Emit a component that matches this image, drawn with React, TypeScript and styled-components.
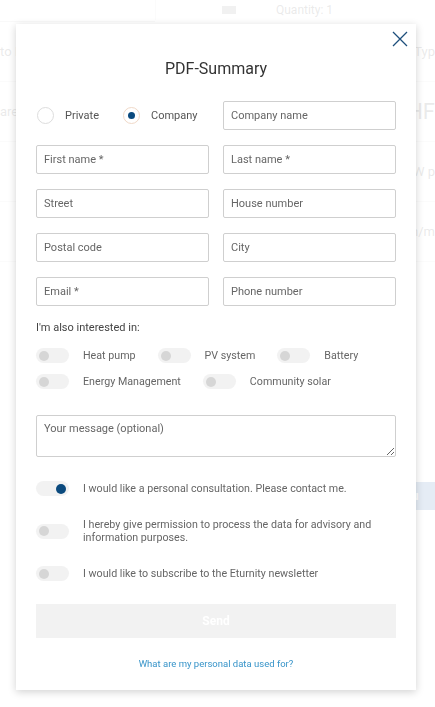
import styled, { createGlobalStyle } from "styled-components";
import { useState } from "react";

const GlobalStyle = createGlobalStyle`
    html, body {
        margin: 0;
        padding: 0;
        font-family: Roboto, "Liberation Sans", sans-serif;
        background: #ffffff;
    }
    * {
        box-sizing: border-box;
    }
`;

const interests = [
    ["Heat pump", "PV system", "Battery"],
    ["Energy Management", "Community solar"],
];

function Toggle({ on, onClick }: { on: boolean; onClick: () => void }) {
    return (
        <Track onClick={onClick}>
            <Knob $on={on} />
        </Track>
    );
}

export default function App() {
    const [kind, setKind] = useState("company");
    const [checks, setChecks] = useState<Record<string, boolean>>({ consult: true });

    const flip = (key: string) => {
        setChecks({ ...checks, [key]: !checks[key] });
    };

    return (
        <>
            <GlobalStyle />
            <Page>
                <PageTop>
                    <SearchStrip />
                    <Quantity>
                        <QtyIcon />
                        <span>Quantity: 1</span>
                    </Quantity>
                </PageTop>
                <PageRows>
                    <PageRow>
                        <span>to I</span>
                        <span>(Typ</span>
                    </PageRow>
                    <PageRow>
                        <span>are</span>
                        <BigText>HF</BigText>
                    </PageRow>
                    <PageRow>
                        <span></span>
                        <span>kW p</span>
                    </PageRow>
                    <PageRow>
                        <span></span>
                        <span>h/m</span>
                    </PageRow>
                </PageRows>
                <PageButton>you</PageButton>
            </Page>

            <Overlay>
                <Modal>
                    <CloseBtn aria-label="close">
                        <svg width="16" height="16" viewBox="0 0 16 16">
                            <path d="M1 1 L15 15 M15 1 L1 15" stroke="#1d4f7c" strokeWidth="1.3" fill="none" />
                        </svg>
                    </CloseBtn>
                    <Title>PDF-Summary</Title>

                    <Grid>
                        <RadioRow>
                            <RadioItem onClick={() => setKind("private")}>
                                <Radio $checked={kind === "private"} />
                                Private
                            </RadioItem>
                            <RadioItem onClick={() => setKind("company")}>
                                <Radio $checked={kind === "company"} />
                                Company
                            </RadioItem>
                        </RadioRow>
                        <Field placeholder="Company name" />
                        <Field placeholder="First name *" />
                        <Field placeholder="Last name *" />
                        <Field placeholder="Street" />
                        <Field placeholder="House number" />
                        <Field placeholder="Postal code" />
                        <Field placeholder="City" />
                        <Field placeholder="Email *" />
                        <Field placeholder="Phone number" />
                    </Grid>

                    <SubHead>I'm also interested in:</SubHead>
                    <Interests>
                        {interests.map((row, i) => (
                            <InterestRow key={i}>
                                {row.map((name) => (
                                    <Option key={name}>
                                        <Toggle on={!!checks[name]} onClick={() => flip(name)} />
                                        <OptionLabel>{name}</OptionLabel>
                                    </Option>
                                ))}
                            </InterestRow>
                        ))}
                    </Interests>

                    <Message placeholder="Your message (optional)" />

                    <Consents>
                        <Consent>
                            <Toggle on={!!checks.consult} onClick={() => flip("consult")} />
                            <ConsentText>I would like a personal consultation. Please contact me.</ConsentText>
                        </Consent>
                        <Consent>
                            <Toggle on={!!checks.permission} onClick={() => flip("permission")} />
                            <ConsentText>
                                I hereby give permission to process the data for advisory and
                                information purposes.
                            </ConsentText>
                        </Consent>
                        <Consent>
                            <Toggle on={!!checks.newsletter} onClick={() => flip("newsletter")} />
                            <ConsentText>I would like to subscribe to the Eturnity newsletter</ConsentText>
                        </Consent>
                    </Consents>

                    <SendBtn disabled>Send</SendBtn>
                    <InfoLink href="#">What are my personal data used for?</InfoLink>
                </Modal>
            </Overlay>
        </>
    );
}

const Page = styled.div`
    width: 100vw;
    height: 100vh;
    overflow: hidden;
    color: #555;
    font-size: 12px;
`;

const PageTop = styled.div`
    display: flex;
    height: 22px;
`;

const SearchStrip = styled.div`
    width: 155px;
    border-bottom: 1px solid #ccc;
`;

const Quantity = styled.div`
    display: flex;
    align-items: center;
    gap: 40px;
    padding-left: 66px;
    border-left: 1px solid #ddd;
    height: 20px;
`;

const QtyIcon = styled.div`
    width: 14px;
    height: 8px;
    background: #888;
`;

const PageRows = styled.div`
    display: flex;
    flex-direction: column;
`;

const PageRow = styled.div`
    display: flex;
    justify-content: space-between;
    align-items: center;
    height: 60px;
    border-bottom: 1px solid #ddd;
    font-size: 13px;
`;

const BigText = styled.span`
    font-size: 22px;
`;

const PageButton = styled.div`
    margin: 220px 0 0 auto;
    width: 40px;
    height: 28px;
    background: #2a64a8;
    color: #fff;
    font-weight: 700;
    line-height: 28px;
    padding-left: 4px;
`;

const Overlay = styled.div`
    position: fixed;
    inset: 0;
    background: rgba(255, 255, 255, 0.88);
    padding: 24px 0 0 16px;
`;

const Modal = styled.div`
    position: relative;
    width: 400px;
    height: 666px;
    background: #fff;
    box-shadow: 0 2px 8px rgba(0, 0, 0, 0.18);
    padding: 35px 20px 0;
    display: flex;
    flex-direction: column;
`;

const CloseBtn = styled.button`
    position: absolute;
    top: 7px;
    right: 8px;
    border: none;
    background: none;
    padding: 0;
    width: 16px;
    height: 16px;
    cursor: pointer;
`;

const Title = styled.h2`
    margin: 0;
    text-align: center;
    font-size: 16px;
    font-weight: 400;
    color: #333;
    line-height: 20px;
`;

const Grid = styled.div`
    display: grid;
    grid-template-columns: 1fr 1fr;
    column-gap: 14px;
    row-gap: 15px;
    margin-top: 22px;
`;

const RadioRow = styled.div`
    display: flex;
    align-items: center;
    gap: 24px;
    padding-left: 1px;
`;

const RadioItem = styled.label`
    display: flex;
    align-items: center;
    gap: 11px;
    font-size: 11px;
    color: #555;
    cursor: pointer;
`;

const Radio = styled.span<{ $checked: boolean }>`
    width: 17px;
    height: 17px;
    border-radius: 50%;
    border: 1px solid ${(p) => (p.$checked ? "#f0d9c8" : "#ddd")};
    display: flex;
    align-items: center;
    justify-content: center;

    &::after {
        content: "";
        width: 7px;
        height: 7px;
        border-radius: 50%;
        background: ${(p) => (p.$checked ? "#0b4a7e" : "transparent")};
    }
`;

const Field = styled.input`
    height: 29px;
    border: 1px solid #cfcfcf;
    border-radius: 2px;
    padding: 0 7px;
    font-family: Roboto, "Liberation Sans", sans-serif;
    font-size: 11px;
    color: #333;
    outline: none;

    &::placeholder {
        color: #666;
    }
`;

const SubHead = styled.div`
    margin-top: 15px;
    font-size: 11px;
    color: #444;
`;

const Interests = styled.div`
    display: flex;
    flex-direction: column;
    gap: 11px;
    margin-top: 14px;
`;

const InterestRow = styled.div`
    display: flex;
    gap: 22px;
`;

const Option = styled.div`
    display: flex;
    align-items: center;
    gap: 14px;
`;

const OptionLabel = styled.span`
    font-size: 10.7px;
    color: #666;
`;

const Track = styled.div`
    width: 33px;
    height: 15px;
    border-radius: 8px;
    background: #f2f2f2;
    position: relative;
    flex-shrink: 0;
    cursor: pointer;
`;

const Knob = styled.span<{ $on: boolean }>`
    position: absolute;
    top: 2.5px;
    left: ${(p) => (p.$on ? "20px" : "3px")};
    width: 10px;
    height: 10px;
    border-radius: 50%;
    background: ${(p) => (p.$on ? "#0b4a7e" : "#d6d6d6")};
`;

const Message = styled.textarea`
    margin-top: 26px;
    height: 42px;
    border: 1px solid #cfcfcf;
    border-radius: 2px;
    padding: 6px 7px;
    font-family: Roboto, "Liberation Sans", sans-serif;
    font-size: 11px;
    resize: vertical;
    outline: none;

    &::placeholder {
        color: #666;
    }
`;

const Consents = styled.div`
    display: flex;
    flex-direction: column;
    gap: 22px;
    margin-top: 24px;
`;

const Consent = styled.div`
    display: flex;
    align-items: center;
    gap: 14px;
`;

const ConsentText = styled.span`
    font-size: 10.7px;
    line-height: 13px;
    color: #666;
    padding-right: 20px;
`;

const SendBtn = styled.button`
    margin-top: 23px;
    height: 34px;
    border: none;
    background: #f2f2f2;
    color: #fff;
    font-family: Roboto, "Liberation Sans", sans-serif;
    font-weight: 700;
    font-size: 12px;
`;

const InfoLink = styled.a`
    margin-top: 20px;
    align-self: center;
    font-size: 9.5px;
    color: #3794c9;
    text-decoration: none;
`;
